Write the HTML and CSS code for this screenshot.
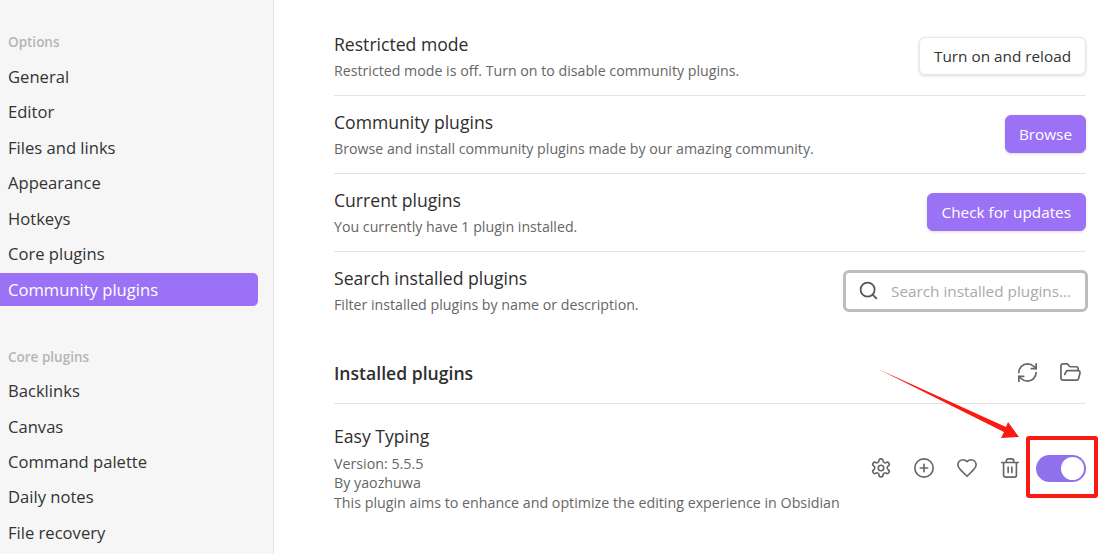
FILE: index.html
```html
<!DOCTYPE html>
<html lang="en">
<head>
  <meta charset="UTF-8">
  <title>Community plugins</title>
  <link rel="stylesheet" href="styles.css">
</head>
<body>
  <nav class="sidebar">
    <div class="nav-title">Options</div>
    <div class="nav-item">General</div>
    <div class="nav-item">Editor</div>
    <div class="nav-item">Files and links</div>
    <div class="nav-item">Appearance</div>
    <div class="nav-item">Hotkeys</div>
    <div class="nav-item">Core plugins</div>
    <div class="nav-item active">Community plugins</div>
    <div class="nav-title second">Core plugins</div>
    <div class="nav-item">Backlinks</div>
    <div class="nav-item">Canvas</div>
    <div class="nav-item">Command palette</div>
    <div class="nav-item">Daily notes</div>
    <div class="nav-item">File recovery</div>
  </nav>

  <main class="content">
    <div class="row">
      <div class="info">
        <div class="name">Restricted mode</div>
        <div class="desc">Restricted mode is off. Turn on to disable community plugins.</div>
      </div>
      <button class="btn">Turn on and reload</button>
    </div>
    <div class="row">
      <div class="info">
        <div class="name">Community plugins</div>
        <div class="desc">Browse and install community plugins made by our amazing community.</div>
      </div>
      <button class="btn primary narrow">Browse</button>
    </div>
    <div class="row">
      <div class="info">
        <div class="name">Current plugins</div>
        <div class="desc">You currently have 1 plugin installed.</div>
      </div>
      <button class="btn primary">Check for updates</button>
    </div>
    <div class="row last">
      <div class="info">
        <div class="name">Search installed plugins</div>
        <div class="desc">Filter installed plugins by name or description.</div>
      </div>
      <div class="search">
        <svg class="search-icon" viewBox="0 0 24 24"><circle cx="11" cy="11" r="8"/><path d="M21 21l-4.3-4.3"/></svg>
        <span class="placeholder">Search installed plugins...</span>
      </div>
    </div>

    <div class="heading">
      <div class="heading-text">Installed plugins</div>
      <div class="heading-icons">
        <svg class="icon big" viewBox="0 0 24 24"><path d="M3 12a9 9 0 0 1 9-9 9.750 9.750 0 0 1 6.740 2.740L21 8"/><path d="M21 3v5h-5"/><path d="M21 12a9 9 0 0 1-9 9 9.750 9.750 0 0 1-6.740-2.740L3 16"/><path d="M8 16H3v5"/></svg>
        <svg class="icon big" viewBox="0 0 24 24"><path d="M6 14l1.500-3A2 2 0 0 1 9.200 10H20a2 2 0 0 1 1.900 2.500l-1.500 6A2 2 0 0 1 18.500 20H4a2 2 0 0 1-2-2V5a2 2 0 0 1 2-2h4a2 2 0 0 1 1.700.9l.8 1.200a2 2 0 0 0 1.700.9H18a2 2 0 0 1 2 2v2"/></svg>
      </div>
    </div>

    <div class="plugin">
      <div class="plugin-info">
        <div class="name">Easy Typing</div>
        <div class="plugin-meta first">Version: 5.5.5</div>
        <div class="plugin-meta">By yaozhuwa</div>
        <div class="plugin-meta">This plugin aims to enhance and optimize the editing experience in Obsidian</div>
      </div>
      <div class="plugin-actions">
        <svg class="icon" viewBox="0 0 24 24"><path d="M12.200 2h-.4a2 2 0 0 0-2 2v.2a2 2 0 0 1-1 1.700l-.4.2a2 2 0 0 1-2 0l-.2-.1a2 2 0 0 0-2.700.7l-.2.4a2 2 0 0 0 .7 2.700l.2.1a2 2 0 0 1 1 1.700v.5a2 2 0 0 1-1 1.700l-.2.1a2 2 0 0 0-.7 2.700l.2.4a2 2 0 0 0 2.700.7l.2-.1a2 2 0 0 1 2 0l.4.2a2 2 0 0 1 1 1.700v.2a2 2 0 0 0 2 2h.4a2 2 0 0 0 2-2v-.2a2 2 0 0 1 1-1.700l.4-.2a2 2 0 0 1 2 0l.2.1a2 2 0 0 0 2.700-.7l.2-.4a2 2 0 0 0-.7-2.700l-.2-.1a2 2 0 0 1-1-1.700v-.5a2 2 0 0 1 1-1.700l.2-.1a2 2 0 0 0 .7-2.700l-.2-.4a2 2 0 0 0-2.700-.7l-.2.1a2 2 0 0 1-2 0l-.4-.2a2 2 0 0 1-1-1.700V4a2 2 0 0 0-2-2z"/><circle cx="12" cy="12" r="3"/></svg>
        <svg class="icon" viewBox="0 0 24 24"><circle cx="12" cy="12" r="10"/><path d="M8 12h8M12 8v8"/></svg>
        <svg class="icon" viewBox="0 0 24 24"><path d="M19 14c1.500-1.500 3-3.200 3-5.500A5.500 5.500 0 0 0 16.500 3c-1.800 0-3 .5-4.500 2-1.500-1.500-2.700-2-4.500-2A5.500 5.500 0 0 0 2 8.500c0 2.300 1.500 4 3 5.500l7 7z"/></svg>
        <svg class="icon" viewBox="0 0 24 24"><path d="M3 6h18M19 6v14a2 2 0 0 1-2 2H7a2 2 0 0 1-2-2V6M8 6V4a2 2 0 0 1 2-2h4a2 2 0 0 1 2 2v2M10 11v6M14 11v6"/></svg>
        <div class="toggle"><div class="knob"></div></div>
      </div>
    </div>
  </main>

  <svg class="arrow" viewBox="0 0 1102 554">
    <polygon points="878,369 1006,427 1008,422 1019,437 1001,438 1004,432"/>
  </svg>
  <div class="callout"></div>
</body>
</html>
```

FILE: styles.css
```css
* {
  box-sizing: border-box;
}
body {
  margin: 0;
  height: 554px;
  overflow: hidden;
  display: flex;
  background-color: #fff;
  color: #222;
  font-family: "Open Sans", "Noto Sans", sans-serif;
}
.sidebar {
  width: 274px;
  flex-shrink: 0;
  height: 554px;
  overflow: hidden;
  padding-top: 31px;
  padding-right: 15px;
  background-color: #f6f6f6;
  border-right: 1px solid #e3e3e3;
}
.nav-title {
  height: 21px;
  line-height: 22px;
  margin-bottom: 8px;
  padding-left: 8px;
  font-size: 13.500px;
  font-weight: 600;
  color: #b5b5b5;
}
.nav-title.second {
  margin-top: 40px;
  margin-bottom: 7.500px;
}
.nav-item {
  height: 33px;
  line-height: 34px;
  margin-bottom: 2.450px;
  padding-left: 8px;
  font-size: 16.600px;
  color: #333;
  border-radius: 0 5px 5px 0;
}
.nav-item.active {
  background-color: #9b72f6;
  color: #fff;
}
.content {
  flex: 1;
  padding: 18px 16px 0 60px;
}
.row {
  height: 78px;
  display: flex;
  align-items: center;
  justify-content: space-between;
  border-bottom: 1px solid #e3e3e3;
}
.row.last {
  height: 77px;
  border-bottom: none;
  margin-right: -2px;
}
.name {
  font-size: 17.600px;
  line-height: 24px;
  color: #2e2e2e;
}
.desc {
  margin-top: 5px;
  font-size: 14.200px;
  line-height: 20px;
  color: #666;
}
.btn {
  height: 38px;
  margin-bottom: 1px;
  padding: 0 14px;
  font-family: inherit;
  font-size: 15.300px;
  color: #333;
  background-color: #fff;
  border: 1px solid #e6e6e6;
  border-radius: 6px;
  box-shadow: 0 1px 3px rgba(0, 0, 0, 0.15);
}
.btn.primary {
  background-color: #9b72f6;
  border-color: #9b72f6;
  color: #fff;
}
.btn.narrow {
  padding: 0 13px;
}
.search {
  width: 245px;
  height: 42px;
  display: flex;
  align-items: center;
  gap: 12px;
  padding-left: 12px;
  background-color: #fff;
  border: 3px solid #bdbdbd;
  border-radius: 6px;
}
.search-icon {
  width: 21px;
  height: 21px;
  flex-shrink: 0;
  fill: none;
  stroke: #555;
  stroke-width: 2;
  stroke-linecap: round;
}
.placeholder {
  font-size: 15.300px;
  color: #aaa;
  white-space: nowrap;
}
.heading {
  height: 75px;
  padding-top: 13px;
  display: flex;
  align-items: center;
  justify-content: space-between;
  border-bottom: 1px solid #e3e3e3;
}
.heading-text {
  font-size: 17.600px;
  font-weight: 600;
  color: #2e2e2e;
}
.heading-icons {
  display: flex;
  gap: 20px;
  padding-right: 4px;
}
.icon {
  width: 22px;
  height: 22px;
  fill: none;
  stroke: #666;
  stroke-width: 1.800;
  stroke-linecap: round;
  stroke-linejoin: round;
}
.icon.big {
  width: 23px;
  height: 23px;
}
.plugin {
  display: flex;
  align-items: center;
  justify-content: space-between;
  padding-top: 20px;
}
.plugin-meta {
  font-size: 14.250px;
  line-height: 19.500px;
  color: #666;
}
.plugin-meta.first {
  margin-top: 5.500px;
}
.plugin-actions {
  display: flex;
  align-items: center;
  gap: 21px;
}
.toggle {
  width: 50px;
  height: 27px;
  margin-left: -6px;
  padding: 2px;
  display: flex;
  justify-content: flex-end;
  background-color: #9170ee;
  border-radius: 14px;
}
.knob {
  width: 23px;
  height: 23px;
  background-color: #fff;
  border-radius: 50%;
}
.arrow {
  position: absolute;
  left: 0;
  top: 0;
  width: 1102px;
  height: 554px;
  fill: #fb1a12;
  pointer-events: none;
}
.callout {
  position: absolute;
  left: 1026px;
  top: 436px;
  width: 72px;
  height: 62px;
  border: 4px solid #fb1a12;
  border-radius: 3px;
}
```
